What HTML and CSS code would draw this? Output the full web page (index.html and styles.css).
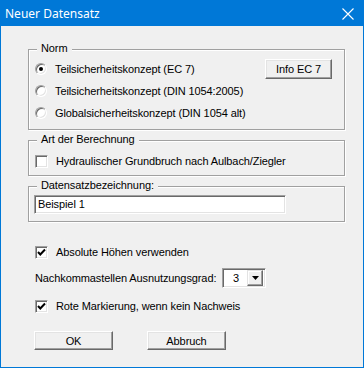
FILE: index.html
```html
<!DOCTYPE html>
<html>
<head>
<meta charset="utf-8">
<link rel="stylesheet" href="styles.css">
</head>
<body>
<div class="window">
  <div class="titlebar">
    <span class="title">Neuer Datensatz</span>
    <svg class="close" width="12" height="12" viewBox="0 0 12 12"><path d="M0.5 0.5 L11.5 11.5 M11.5 0.5 L0.5 11.5" stroke="#fff" stroke-width="1.1" fill="none"/></svg>
  </div>
  <div class="client">
    <div class="group norm">
      <span class="legend">Norm</span>
      <div class="row">
        <span class="radio checked"></span><span class="lbl">Teilsicherheitskonzept (EC 7)</span>
        <span class="btn info">Info EC 7</span>
      </div>
      <div class="row"><span class="radio"></span><span class="lbl">Teilsicherheitskonzept (DIN 1054:2005)</span></div>
      <div class="row"><span class="radio"></span><span class="lbl">Globalsicherheitskonzept (DIN 1054 alt)</span></div>
    </div>
    <div class="group art">
      <span class="legend">Art der Berechnung</span>
      <div class="row"><span class="check"></span><span class="lbl">Hydraulischer Grundbruch nach Aulbach/Ziegler</span></div>
    </div>
    <div class="group daten">
      <span class="legend">Datensatzbezeichnung:</span>
      <div class="input">Beispiel 1</div>
    </div>
    <div class="lower">
      <div class="row first"><span class="check on"><svg width="9" height="9" viewBox="0 0 9 9"><path d="M1 4 L3.3 6.5 L8 1.5" stroke="#000" stroke-width="2" fill="none"/></svg></span><span class="lbl">Absolute Höhen verwenden</span></div>
      <div class="row combo-row">
        <span class="combo-label">Nachkommastellen Ausnutzungsgrad:</span>
        <span class="combo"><span class="combo-val">3</span><span class="combo-btn"><svg width="7" height="4" viewBox="0 0 7 4"><path d="M0 0 H7 L3.5 4 Z" fill="#000"/></svg></span></span>
      </div>
      <div class="row third"><span class="check on"><svg width="9" height="9" viewBox="0 0 9 9"><path d="M1 4 L3.3 6.5 L8 1.5" stroke="#000" stroke-width="2" fill="none"/></svg></span><span class="lbl">Rote Markierung, wenn kein Nachweis</span></div>
      <div class="buttons">
        <span class="btn ok">OK</span>
        <span class="btn cancel">Abbruch</span>
      </div>
    </div>
  </div>
</div>
</body>
</html>
```
FILE: styles.css
```css
* { box-sizing: border-box; }
html, body { margin: 0; padding: 0; background: #fff; }
body {
  font-family: "Liberation Sans", Arial, sans-serif;
  font-size: 11px;
  letter-spacing: -0.1px;
  color: #000;
}
.window {
  width: 364px;
  height: 368px;
  border: 1px solid #0078d7;
  background: #f0f0f0;
  display: flex;
  flex-direction: column;
}
.titlebar {
  height: 25px;
  background: #0078d7;
  display: flex;
  align-items: center;
  padding-left: 4px;
  padding-right: 9px;
  justify-content: space-between;
}
.title {
  font-family: "Noto Sans", "Open Sans", sans-serif;
  font-size: 12px;
  letter-spacing: 0;
  color: #fff;
  margin-top: 0px;
}
.close { display: block; margin-top: 1px; }
.client {
  padding: 23px 18px 0 27px;
  display: flex;
  flex-direction: column;
}
.group {
  position: relative;
  border: 1px solid #a0a0a0;
  box-shadow: inset 1px 1px 0 #fff, 1px 1px 0 #fff;
  padding-left: 5px;
}
.legend {
  position: absolute;
  top: -8px;
  left: 8px;
  padding: 0 4px 0 4px;
  background: #f0f0f0;
  line-height: 13px;
}
.norm { height: 81px; padding-top: 8px; padding-right: 12px; }
.art { height: 36px; padding-top: 9px; margin-top: 10px; }
.daten { height: 36px; padding-top: 8px; margin-top: 10px; }
.row {
  height: 22px;
  display: flex;
  align-items: center;
}
.group .row { padding-left: 1px; }
.lbl { margin-left: 8px; white-space: nowrap; }
.radio {
  width: 12px;
  height: 12px;
  border-radius: 50%;
  background: #fff;
  border: 1px solid;
  border-color: #a0a0a0 #fff #fff #a0a0a0;
  box-shadow: inset 1px 1px 0 #696969, inset -1px -1px 0 #e3e3e3;
  display: flex;
  align-items: center;
  justify-content: center;
  flex: none;
}
.radio.checked::after {
  content: "";
  width: 4px;
  height: 4px;
  border-radius: 50%;
  background: #000;
}
.lbl + .btn { margin-left: auto; }
.check {
  width: 13px;
  height: 13px;
  background: #fff;
  border: 1px solid;
  border-color: #a0a0a0 #fff #fff #a0a0a0;
  box-shadow: inset 1px 1px 0 #696969, inset -1px -1px 0 #e3e3e3;
  display: flex;
  align-items: center;
  justify-content: center;
  flex: none;
}
.check svg { display: block; }
.btn {
  display: flex;
  align-items: center;
  justify-content: center;
  background: #f0f0f0;
  border: 1px solid;
  border-color: #fff #696969 #696969 #fff;
  box-shadow: inset -1px -1px 0 #a0a0a0, inset 1px 1px 0 #e3e3e3;
  white-space: nowrap;
}
.info { width: 67px; height: 20px; }
.input {
  width: 252px;
  height: 19px;
  background: #fff;
  border: 1px solid;
  border-color: #a0a0a0 #fff #fff #a0a0a0;
  box-shadow: inset 1px 1px 0 #696969, inset -1px -1px 0 #e3e3e3;
  padding-left: 3px;
  line-height: 17px;
}
.lower {
  padding-left: 6px;
  display: flex;
  flex-direction: column;
}
.lower .row { padding-left: 1px; }
.row.first { margin-top: 19px; }
.row.combo-row { margin-top: 4px; }
.row.third { margin-top: 6px; }
.combo-label { width: 187px; white-space: nowrap; }
.combo {
  width: 44px;
  height: 20px;
  background: #fff;
  border: 1px solid;
  border-color: #a0a0a0 #fff #fff #a0a0a0;
  box-shadow: inset 1px 1px 0 #696969, inset -1px -1px 0 #e3e3e3;
  display: flex;
  align-items: center;
  padding: 2px 2px 2px 2px;
}
.combo-val { flex: 1; padding-left: 8px; }
.combo-btn {
  width: 16px;
  height: 16px;
  background: #f0f0f0;
  border: 1px solid;
  border-color: #e3e3e3 #696969 #696969 #e3e3e3;
  box-shadow: inset -1px -1px 0 #a0a0a0, inset 1px 1px 0 #fff;
  display: flex;
  align-items: center;
  justify-content: center;
}
.combo-btn svg { display: block; }
.buttons {
  margin-top: 14px;
  display: flex;
  gap: 34px;
}
.ok { width: 79px; height: 19px; }
.cancel { width: 79px; height: 19px; }
```
